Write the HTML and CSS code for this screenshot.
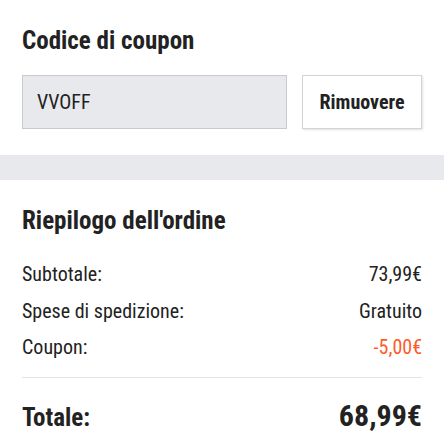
FILE: index.html
```html
<!DOCTYPE html>
<html lang="it">
<head>
<meta charset="utf-8">
<link rel="stylesheet" href="styles.css">
</head>
<body>
<section class="coupon">
  <h2 class="title">Codice di coupon</h2>
  <div class="coupon-row">
    <div class="coupon-input">VVOFF</div>
    <button class="remove">Rimuovere</button>
  </div>
</section>
<div class="band"></div>
<section class="summary">
  <h2 class="title">Riepilogo dell'ordine</h2>
  <div class="rows">
    <div class="row"><span>Subtotale:</span><span>73,99€</span></div>
    <div class="row"><span>Spese di spedizione:</span><span>Gratuito</span></div>
    <div class="row"><span>Coupon:</span><span class="discount">-5,00€</span></div>
  </div>
  <div class="total"><span class="total-label">Totale:</span><span class="total-value">68,99€</span></div>
</section>
</body>
</html>
```
FILE: styles.css
```css
* { box-sizing: border-box; }
body {
  margin: 0;
  font-family: "Roboto Condensed", Roboto, "Liberation Sans", sans-serif;
  font-stretch: condensed;
  color: #222;
  background: #fff;
}
.coupon { padding: 26px 22px 26px; }
.title {
  margin: 0;
  font-size: 25px;
  font-weight: 700;
  line-height: 30px;
}
.coupon-row {
  display: flex;
  margin-top: 19px;
  gap: 15px;
}
.coupon-input {
  flex: 1;
  height: 54px;
  background: #e8e9ec;
  border: 1px solid #c9cacd;
  display: flex;
  align-items: center;
  padding: 0 14px;
  font-size: 20px;
}
.remove {
  width: 120px;
  height: 54px;
  background: #fff;
  border: 1px solid #d3d4d6;
  box-shadow: 1px 1px 2px rgba(0,0,0,0.12);
  font-family: inherit;
  font-stretch: inherit;
  font-weight: 700;
  font-size: 20px;
  color: #222;
}
.band { height: 25px; background: #e8e9ec; }
.summary { padding: 26px 22px 0; }
.rows { margin-top: 20px; }
.row {
  display: flex;
  justify-content: space-between;
  font-size: 20px;
  line-height: 36.5px;
}
.discount { color: #ff5a2a; }
.total {
  margin-top: 11px;
  border-top: 1px solid #e5e5e5;
  display: flex;
  justify-content: space-between;
  align-items: baseline;
  padding-top: 20px;
  line-height: 36px;
}
.total-label { font-size: 25px; font-weight: 700; }
.total-value { font-size: 30px; font-weight: 700; }
```
